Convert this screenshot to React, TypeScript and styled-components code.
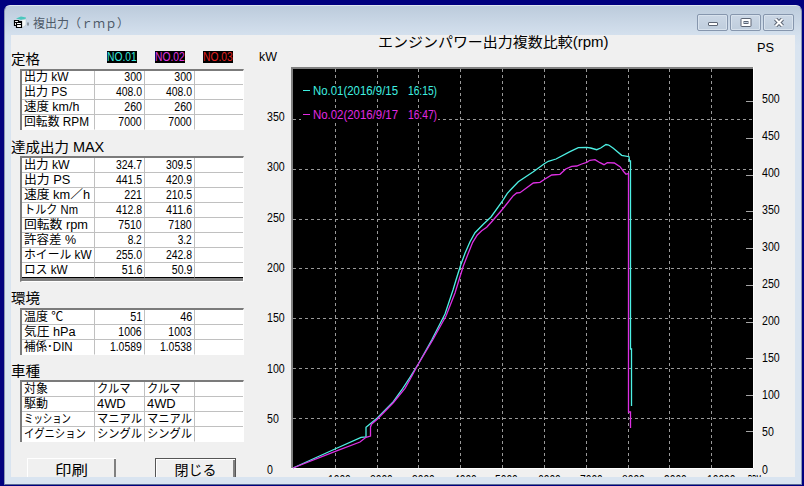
import React, { useLayoutEffect, useRef, useState } from 'react';
import styled, { createGlobalStyle, css } from 'styled-components';

const GlobalStyle = createGlobalStyle`
  body { margin: 0; background: #00007f; overflow: hidden; }
  * { box-sizing: border-box; }
`;

const fontStack = '"Liberation Sans", "Noto Sans CJK JP", sans-serif';

const Desktop = styled.div`
  width: 804px;
  height: 486px;
  padding: 5px 2px 1px 4px;
  background: #00007f;
  font-family: ${fontStack};
  color: #000;
`;

const Window = styled.div`
  display: flex;
  flex-direction: column;
  height: 480px;
  padding: 0 6px 6px;
  border: 1px solid #8b97b4;
  border-top-color: #dfe6f0;
  border-bottom-color: #5a6a94;
  border-radius: 6px 6px 0 0;
  background: linear-gradient(#bccbdc 0, #d5e1ee 30px, #d9e4f0 40px);
`;

const TitleBar = styled.header`
  display: flex;
  align-items: center;
  flex: none;
  height: 29px;
  padding: 5px 1px 0 2px;
`;

const WindowTitle = styled.div`
  flex: 1;
  margin-left: 4px;
  font: 12px/18px "Noto Sans CJK JP", sans-serif;
  color: #4e5a68;
  white-space: nowrap;
`;

const Controls = styled.div`
  display: flex;
  gap: 2px;
  margin-top: -1px;
`;

const ControlButton = styled.button`
  display: grid;
  place-items: center;
  width: 31px;
  height: 17px;
  padding: 0;
  border: 1px solid #8696ad;
  border-radius: 2px;
  background: linear-gradient(#cbd7e5, #bfcddd);
  box-shadow: inset 0 0 0 1px #d8e2ed;
`;

const Client = styled.main`
  display: flex;
  height: 442px;
  overflow: hidden;
  background: #f0f0f0;
`;

const Sidebar = styled.aside`
  width: 245px;
  flex: none;
`;

const Heading = styled.h2<{ $top: number; $bottom: number }>`
  display: flex;
  align-items: center;
  height: 16px;
  margin: ${(p) => p.$top}px 0 ${(p) => p.$bottom}px;
  font: 14px/16px ${fontStack};
`;

const HeadingText = styled.span`
  flex: none;
  width: 96px;
`;

const Tag = styled.span<{ $color: string }>`
  display: flex;
  width: 30px;
  height: 12px;
  margin: -5px 18px 0 0;
  background: #000;
  color: ${(p) => p.$color};
  font-size: 12px;
  line-height: 13px;
`;

const Grid = styled.div<{ $first: number; $heavy?: boolean }>`
  display: grid;
  grid-template-columns: 73px 50px 50px 48px;
  grid-template-rows: ${(p) => p.$first}px;
  grid-auto-rows: 15px;
  width: 224px;
  margin-left: 9px;
  border-top: 2px solid #7b7b7b;
  border-left: 2px solid #7b7b7b;
  border-right: 1px solid #fff;
  background: #fff;
  ${(p) =>
    p.$heavy &&
    css`
      height: 126px;
      border-bottom: 1px solid #fff;
      background: #808080;
    `}
`;

const Cell = styled.div<{ $align?: 'right'; $last?: boolean; $bottom?: string }>`
  display: flex;
  justify-content: ${(p) => (p.$align === 'right' ? 'flex-end' : 'flex-start')};
  align-items: flex-end;
  min-width: 0;
  padding: 0 2px;
  border-right: ${(p) => (p.$last ? 'none' : '1px solid #c0c0c0')};
  border-bottom: 1px solid ${(p) => p.$bottom ?? '#c0c0c0'};
  background: #fff;
  font-size: 12px;
  line-height: 13px;
`;

const FitBox = styled.span<{ $origin: 'left' | 'right' }>`
  display: flex;
  flex: none;
  justify-content: ${(p) => (p.$origin === 'right' ? 'flex-end' : 'flex-start')};
  > span {
    flex: none;
    white-space: pre;
    transform-origin: ${(p) => p.$origin} center;
  }
`;

/** Condenses or stretches a run of text to a given pixel width. */
function Fit({ width, origin = 'left', children }: { width: number; origin?: 'left' | 'right'; children: string }) {
  const ref = useRef<HTMLSpanElement>(null);
  const [scale, setScale] = useState(1);
  useLayoutEffect(() => {
    if (ref.current) setScale(width / ref.current.offsetWidth);
  }, [width, children]);
  return (
    <FitBox $origin={origin} style={{ width }}>
      <span ref={ref} style={{ transform: `scaleX(${scale})` }}>{children}</span>
    </FitBox>
  );
}

type Row = [label: string, labelWidth: number, a: string, b: string];

const numberWidth = (s: string) => [...s].reduce((w, c) => w + (c === '.' ? 2.5 : 5.9), 0);

function DataTable({ rows, first, heavy, text }: { rows: Row[]; first: number; heavy?: boolean; text?: boolean }) {
  return (
    <Grid $first={first} $heavy={heavy}>
      {rows.map(([label, width, a, b], i) => {
        const bottom = i < rows.length - 1 ? '#c0c0c0' : heavy ? '#000' : '#fff';
        return (
          <React.Fragment key={label}>
            <Cell $bottom={bottom}><Fit width={width}>{label}</Fit></Cell>
            {[a, b].map((value, k) => (
              <Cell key={k} $bottom={bottom} $align={text ? undefined : 'right'}>
                {text ? (
                  <Fit width={value === '4WD' ? 29 : value === 'クルマ' ? 34 : 45}>{value}</Fit>
                ) : (
                  <Fit width={numberWidth(value)} origin="right">{value}</Fit>
                )}
              </Cell>
            ))}
            <Cell $last $bottom={bottom} />
          </React.Fragment>
        );
      })}
    </Grid>
  );
}

const rated: Row[] = [
  ['出力 kW', 45, '300', '300'],
  ['出力 PS', 43, '408.0', '408.0'],
  ['速度 km/h', 55, '260', '260'],
  ['回転数 RPM', 65, '7000', '7000'],
];
const achieved: Row[] = [
  ['出力 kW', 46, '324.7', '309.5'],
  ['出力 PS', 46, '441.5', '420.9'],
  ['速度 km／h', 66, '221', '210.5'],
  ['トルク Nm', 54, '412.8', '411.6'],
  ['回転数 rpm', 64, '7510', '7180'],
  ['許容差 %', 52, '8.2', '3.2'],
  ['ホイール kW', 68, '255.0', '242.8'],
  ['ロス kW', 44, '51.6', '50.9'],
];
const environment: Row[] = [
  ['温度 ℃', 39, '51', '46'],
  ['気圧 hPa', 52, '1006', '1003'],
  ['補係･DIN', 49, '1.0589', '1.0538'],
];
const vehicle: Row[] = [
  ['対象', 24, 'クルマ', 'クルマ'],
  ['駆動', 24, '4WD', '4WD'],
  ['ミッション', 47, 'マニアル', 'マニアル'],
  ['イグニション', 62, 'シングル', 'シングル'],
];

const Actions = styled.div`
  display: flex;
  gap: 39px;
  margin: 16px 0 0 16px;
`;

const ActionButton = styled.button<{ $default?: boolean; $width: number }>`
  display: flex;
  justify-content: center;
  width: ${(p) => p.$width}px;
  height: 27px;
  padding: ${(p) => (p.$default ? 2 : 3)}px 0 0;
  border: ${(p) => (p.$default ? '1px solid #555' : 'none')};
  background: #f0f0f0;
  box-shadow: inset 1px 1px #fff, inset -2px -2px #808080;
  color: #000;
  font: 14px/18px ${fontStack};
`;

const ChartPanel = styled.section`
  display: flex;
  flex-direction: column;
  width: 539px;
`;

const ChartHeader = styled.div`
  display: flex;
  height: 17px;
  flex: none;
`;

const ChartTitle = styled.h1`
  flex: none;
  height: 17px;
  margin: -1px 0 0 122px;
  font: 14px/17px ${fontStack};
`;

const RightUnit = styled.div`
  margin: 5px 0 0 149px;
  height: 17px;
  font: 12px/17px ${fontStack};
`;

const Plot = styled.svg`
  display: block;
  flex: none;
  font: 12px ${fontStack};
`;

const xLines = [335, 377, 418, 460, 502, 544, 586, 628, 669, 711];
const yLines = [119, 169, 219, 268, 318, 368, 418];
const kwLabels: [string, number][] = [['350', 117], ['300', 167], ['250', 217.5], ['200', 268], ['150', 318], ['100', 369], ['50', 419], ['0', 470]];
const psLabels: [string, number][] = [
  ['500', 99], ['450', 136], ['400', 173], ['350', 210], ['300', 247], ['250', 284],
  ['200', 321], ['150', 358], ['100', 395], ['50', 432], ['0', 470],
];
const psTicks = [101, 138, 175, 211, 248, 285, 322, 358, 395, 431];
const rpmLabels: [string, number][] = [
  ['1000', 328], ['2000', 370], ['3000', 412], ['4000', 454], ['5000', 495],
  ['6000', 538], ['7000', 580], ['8000', 622], ['9000', 664], ['10000', 707],
];

const run1 =
  '293,468 335,449 361,437.3 366,437 366,427.3 370,424 377.3,418 393.3,401.7 401.7,390 410,377.3 418.3,364 431.7,340 ' +
  '445,314 453,290 456,280 460.7,265 465,253.3 470,241.7 475,232.7 483.3,224.3 491,217 502.7,200.7 507.3,193.3 518.3,181.7 ' +
  '533.3,171.7 544.3,163.7 548.3,161.3 556,159 570,151.7 578.3,147.7 586.7,147.3 590.7,148 596.7,149.7 600.7,148 606,144.5 ' +
  '608.7,145 613.3,148.3 621.7,155.3 629,156.7 629.5,161 630.5,161 630.5,349 631.5,349 631.5,406';
const run2 =
  '293,468 335.3,451.3 360,442 366,437.3 370.5,436 370.5,427 371.7,424 377.3,419.3 393.5,402.5 405,388.3 410,379.5 418.3,364 ' +
  '432.7,340 446,316 455,293 459,280 463.3,266 468.3,253.3 472.7,242.3 477.3,235 481.7,230.7 486.7,227.3 491.7,221.7 ' +
  '502.7,209 513.3,195.7 516.7,193 520,192.7 533.3,183 540,182.3 545,179 551.7,175 560,174.3 565.7,169 571.7,166.3 ' +
  '576.7,166 581.7,164 586.7,162.3 590,160.3 595,159.7 600,162.7 604,164.7 607.3,162.7 614.3,163 620,166.7 624,172 ' +
  '626,174.3 628.5,173.5 628.5,412 630.5,412 630.5,428';

const legend = [
  { name: 'No.01(2016/9/15', time: '16:15)', color: '#3ff0e0', y: 95 },
  { name: 'No.02(2016/9/17', time: '16:47)', color: '#e22ae2', y: 119 },
];

function PowerChart() {
  return (
    <Plot width="539" height="425" viewBox="256 52 539 425">
      <rect x="291" y="67" width="463" height="402" fill="#808080" />
      <path d="M753.5 67V468.5H291" fill="none" stroke="#fff" />
      <rect x="293" y="69" width="460" height="399" fill="#000" />
      <g stroke="#999" strokeDasharray="3 3" shapeRendering="crispEdges">
        {xLines.map((x) => <line key={x} x1={x + 0.5} x2={x + 0.5} y1="69" y2="468" />)}
        {yLines.map((y) => <line key={y} x1="293" x2="753" y1={y + 0.5} y2={y + 0.5} />)}
      </g>
      <g stroke="#a6a6a6" shapeRendering="crispEdges">
        {psTicks.map((y) => <line key={y} x1="746" x2="753" y1={y + 0.5} y2={y + 0.5} />)}
      </g>
      {legend.map(({ name, time, color, y }) => (
        <g key={name} fill={color}>
          <rect x="301" y={y - 11} width="137" height="13" fill="#000" />
          <path d={`M303 ${y - 4.5}h7`} stroke={color} />
          <text x="313" y={y} textLength="85" lengthAdjust="spacingAndGlyphs">{name}</text>
          <text x="408" y={y} textLength="29" lengthAdjust="spacingAndGlyphs">{time}</text>
        </g>
      ))}
      <polyline points={run1} fill="none" stroke="#4df0e4" strokeWidth="1.3" />
      <polyline points={run2} fill="none" stroke="#dd2fe3" strokeWidth="1.3" />
      <text x="259" y="61" textLength="18" lengthAdjust="spacingAndGlyphs">kW</text>
      {kwLabels.map(([t, y]) => (
        <text key={t} x="267" y={y + 4} textLength={t.length * 5.9} lengthAdjust="spacingAndGlyphs">{t}</text>
      ))}
      {psLabels.map(([t, y]) => (
        <text key={t} x="762" y={y + 4} textLength={t.length * 5.9} lengthAdjust="spacingAndGlyphs">{t}</text>
      ))}
      {rpmLabels.map(([t, x]) => (
        <text key={t} x={x} y="484" textLength={t.length * 5.7} lengthAdjust="spacingAndGlyphs">{t}</text>
      ))}
      <text x="748" y="484" textLength="13" lengthAdjust="spacingAndGlyphs">RPM</text>
    </Plot>
  );
}

export default function App() {
  return (
    <>
      <GlobalStyle />
      <Desktop>
        <Window>
          <TitleBar>
            <svg width="16" height="14" viewBox="0 0 16 14">
              <path d="M3 2.5L8 .5l5 1-1 4-5-2z" fill="#49c7bd" />
              <path d="M8 4l5-1v6l-4 3z" fill="#f4f8f8" stroke="#aebdc8" strokeWidth=".5" />
              <path d="M1.5 4.5h4v1h3v6h-5v-2h-2z" fill="#fff" stroke="#000" strokeWidth="1.2" />
              <path d="M1.5 6.5h7M3.5 8.5h5M3.5 6v4" stroke="#000" fill="none" />
              <path d="M14 6.5h2v3h-2z" fill="#8995a0" />
            </svg>
            <WindowTitle>複出力（ｒｍｐ）</WindowTitle>
            <Controls>
              <ControlButton aria-label="最小化">
                <svg width="12" height="9"><rect x="1.5" y="4.5" width="9" height="3" rx=".5" fill="#fff" stroke="#5c6574" /></svg>
              </ControlButton>
              <ControlButton aria-label="最大化">
                <svg width="12" height="9">
                  <rect x="1" y=".5" width="10" height="8" rx=".5" fill="#fff" stroke="#5c6574" />
                  <rect x="4" y="3.5" width="4" height="2" fill="#c3d0df" stroke="#5c6574" />
                </svg>
              </ControlButton>
              <ControlButton aria-label="閉じる">
                <svg width="12" height="9">
                  <path d="M2.5 1L9.5 8M9.5 1L2.5 8" stroke="#5c6574" strokeWidth="4" />
                  <path d="M2.5 1L9.5 8M9.5 1L2.5 8" stroke="#fff" strokeWidth="2" />
                </svg>
              </ControlButton>
            </Controls>
          </TitleBar>
          <Client>
            <Sidebar>
              <Heading $top={16} $bottom={2}>
                <HeadingText><Fit width={29}>定格</Fit></HeadingText>
                <Tag $color="#35e6dc"><Fit width={30}>NO.01</Fit></Tag>
                <Tag $color="#e035e0"><Fit width={30}>NO.02</Fit></Tag>
                <Tag $color="#e02020"><Fit width={30}>NO.03</Fit></Tag>
              </Heading>
              <DataTable rows={rated} first={14} />
              <Heading $top={9} $bottom={1}><Fit width={93}>達成出力 MAX</Fit></Heading>
              <DataTable rows={achieved} first={15} heavy />
              <Heading $top={8} $bottom={2}><Fit width={29}>環境</Fit></Heading>
              <DataTable rows={environment} first={15} />
              <Heading $top={8} $bottom={1}><Fit width={29}>車種</Fit></Heading>
              <DataTable rows={vehicle} first={15} text />
              <Actions>
                <ActionButton $width={89}><Fit width={33}>印刷</Fit></ActionButton>
                <ActionButton $width={81} $default><Fit width={42}>閉じる</Fit></ActionButton>
              </Actions>
            </Sidebar>
            <ChartPanel>
              <ChartHeader>
                <ChartTitle><Fit width={230}>エンジンパワー出力複数比較(rpm)</Fit></ChartTitle>
                <RightUnit><Fit width={17}>PS</Fit></RightUnit>
              </ChartHeader>
              <PowerChart />
            </ChartPanel>
          </Client>
        </Window>
      </Desktop>
    </>
  );
}
